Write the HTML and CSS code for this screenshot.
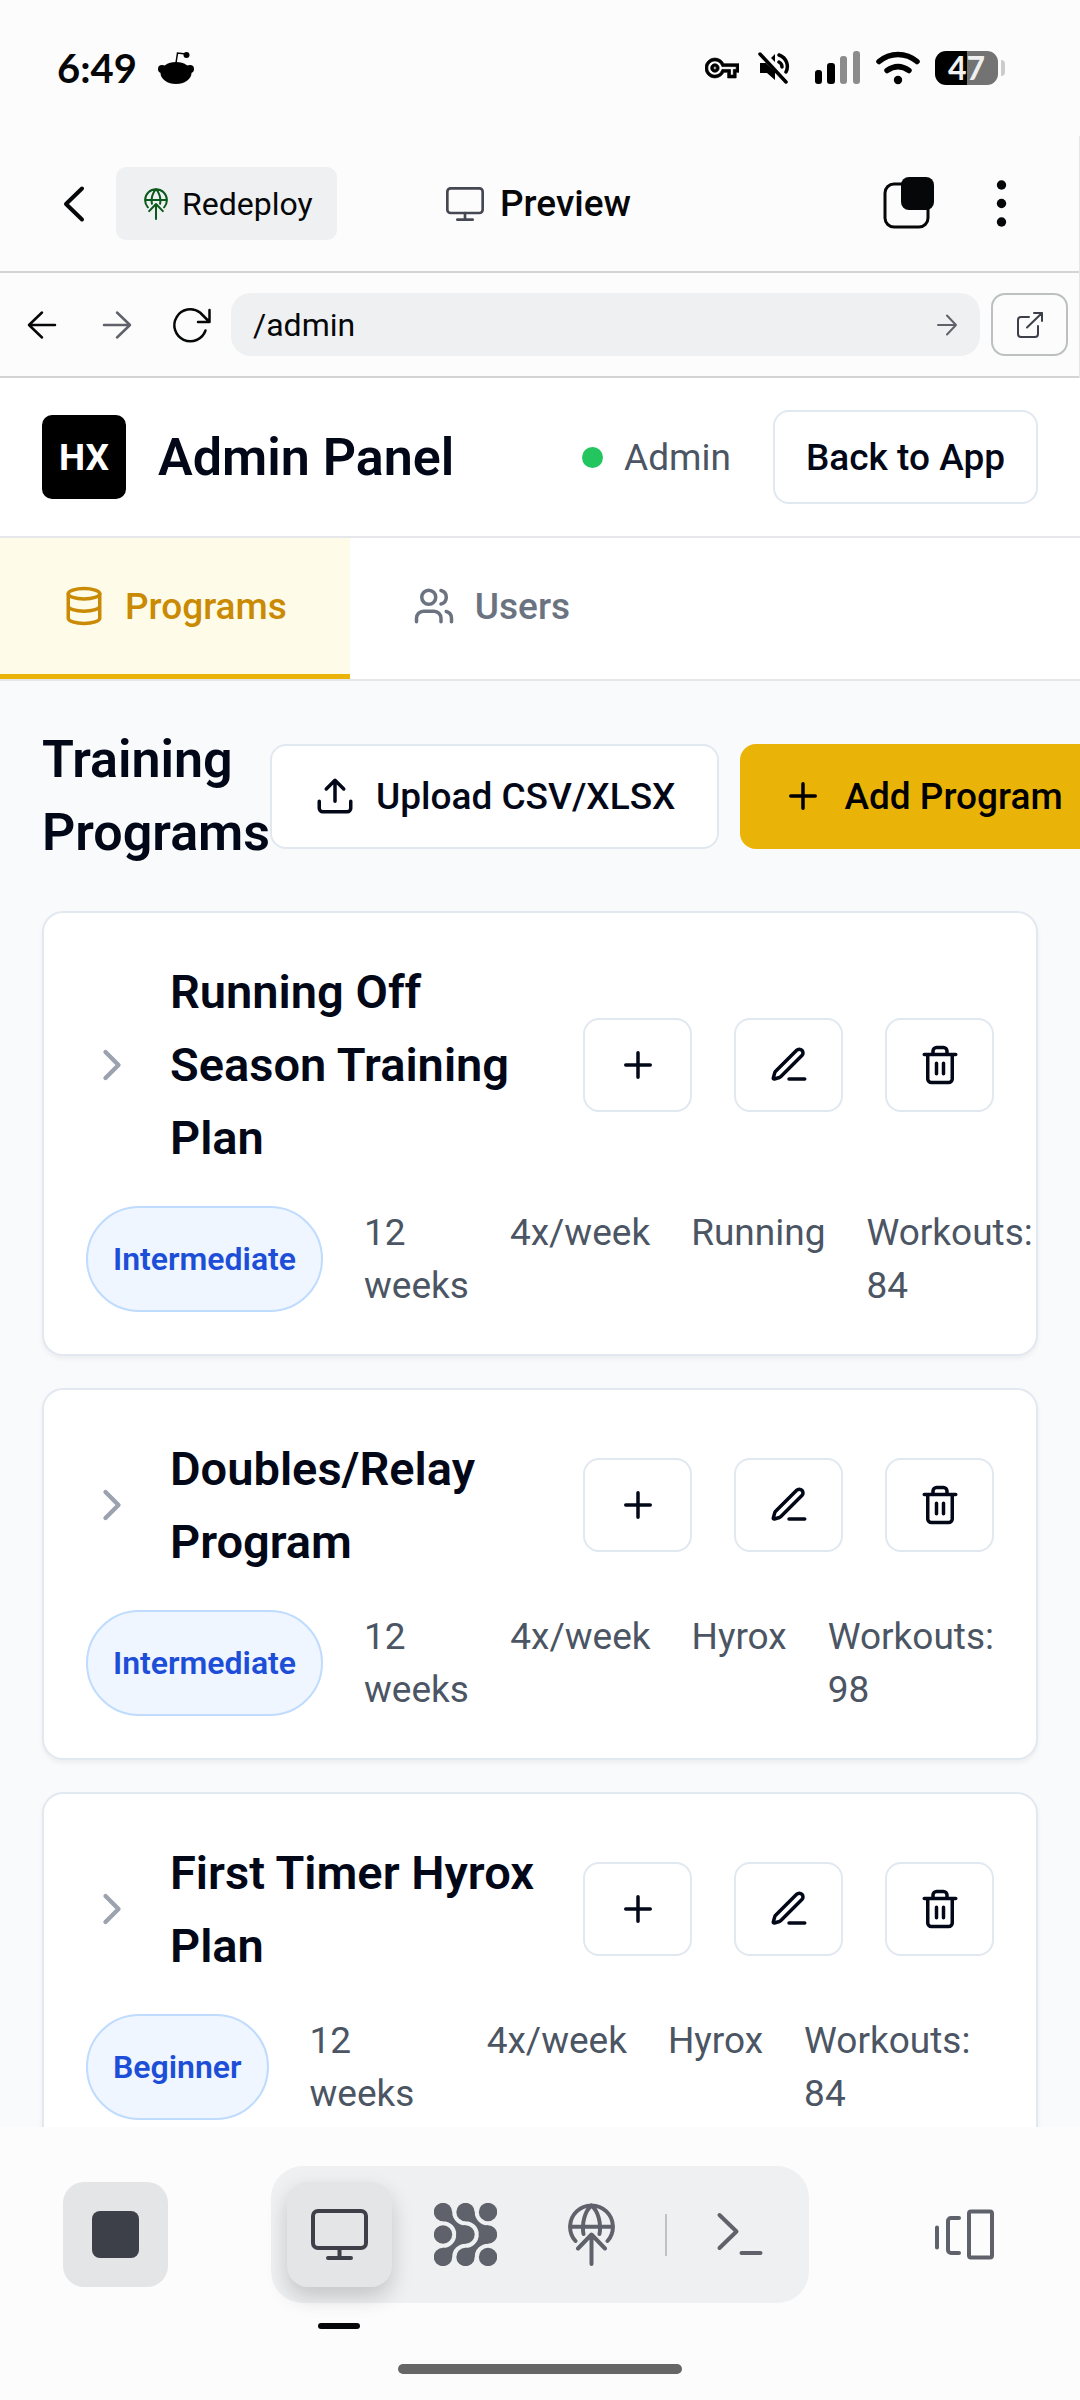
FILE: index.html
```html
<!DOCTYPE html>
<html lang="en">
<head>
<meta charset="utf-8">
<meta name="viewport" content="width=device-width, initial-scale=1">
<title>Admin Panel - Preview</title>
<link rel="stylesheet" href="styles.css">
</head>
<body>
<svg class="sprite" aria-hidden="true">
  <symbol id="i-monitor" viewBox="0 0 63 63"><rect x="5" y="8" width="53" height="37" rx="5"/><path d="M31.500 45v10M20 55h23"/></symbol>
  <symbol id="i-deploy" viewBox="0 0 63 63"><path d="M15.500 38A21.400 21.400 0 1 1 47.500 38M10 23.700h43M31.500 2.500C25 8 21.500 20 23.500 31M31.500 2.500C38 8 41.500 20 39.500 31M31.500 32v29M18 45.500l13.500-14L45 45.500"/></symbol>
  <symbol id="i-plus" viewBox="0 0 24 24"><path d="M5 12h14M12 5v14"/></symbol>
  <symbol id="i-edit" viewBox="0 0 24 24"><path d="M12 20h9M16.376 3.622a1 1 0 0 1 3.002 3.002L7.368 18.635a2 2 0 0 1-.855.506l-2.872.838a.5.5 0 0 1-.62-.62l.838-2.872a2 2 0 0 1 .506-.854z"/></symbol>
  <symbol id="i-trash" viewBox="0 0 24 24"><path d="M3 6h18M19 6v14c0 1-1 2-2 2H7c-1 0-2-1-2-2V6M8 6V4c0-1 1-2 2-2h4c1 0 2 1 2 2v2M10 11v6M14 11v6"/></symbol>
  <symbol id="i-chevron" viewBox="0 0 24 24"><path d="m9 18 6-6-6-6"/></symbol>
</svg>

<header class="status">
  <div class="status-left">
    <span class="clock">6:49</span>
    <svg width="36" height="32" viewBox="0 0 36 32" aria-hidden="true"><path d="M18 11 19.500 1 28 2" fill="none" stroke="#000" stroke-width="1.500"/><circle cx="28.500" cy="3" r="3"/><circle cx="4" cy="17" r="4"/><circle cx="32" cy="17" r="4"/><ellipse cx="18" cy="21" rx="15.500" ry="11"/></svg>
  </div>
  <div class="status-right">
    <svg class="key" width="34" height="34" viewBox="0 0 24 24" aria-hidden="true"><path stroke="#000" stroke-width=".5" d="M22 19h-6v-4h-2.680c-1.140 2.420-3.600 4-6.320 4-3.860 0-7-3.140-7-7s3.140-7 7-7c2.720 0 5.170 1.580 6.320 4H24v6h-2v4zm-4-2h2v-4h2v-2H11.940l-.23-.67C11.010 8.340 9.110 7 7 7c-2.760 0-5 2.240-5 5s2.240 5 5 5c2.110 0 4.010-1.340 4.710-3.330l.23-.67H18v4zM7 15c-1.650 0-3-1.350-3-3s1.350-3 3-3 3 1.350 3 3-1.350 3-3 3zm0-4c-.55 0-1 .45-1 1s.45 1 1 1 1-.45 1-1-.45-1-1-1z"/></svg>
    <svg class="mute" width="32" height="32" viewBox="0 0 32 32" aria-hidden="true"><path d="M2 11h6L17 20v8l-8-7H2zM13 6l4-4v8z"/><path d="M2 2 28 30M21 3c8 3 10 11 7 17M21 10c2 1 3 3 3 5" fill="none" stroke="#000" stroke-width="3.500" stroke-linecap="round"/></svg>
    <svg class="signal" width="46" height="34" viewBox="0 0 46 34" aria-hidden="true"><rect x="0" y="19" width="7" height="14" rx="3"/><rect x="12" y="12" width="8" height="21" rx="3"/><rect x="25" y="5" width="7" height="28" rx="3" fill="#8c8c8c"/><rect x="38" y="0" width="7" height="33" rx="3" fill="#8c8c8c"/></svg>
    <svg class="wifi" width="44" height="34" viewBox="0 0 44 34" aria-hidden="true"><path d="M3 10.500C14 1 30 1 41 10.500M11 19.500c7-5 15-5 22 0" fill="none" stroke="#000" stroke-width="5.500" stroke-linecap="round"/><circle cx="22" cy="29" r="4.200"/></svg>
    <span class="battery">47</span>
    <span class="battery-tip"></span>
  </div>
</header>

<div class="browser">
<div class="toolbar">
  <div class="toolbar-left">
    <button class="tool back" aria-label="Back"><svg width="64" height="64" viewBox="0 0 64 64"><path d="M40 16.500 24 32l16 15.500" stroke-width="4"/></svg></button>
    <button class="redeploy"><svg class="deploy-small" width="32" height="32"><use href="#i-deploy"/></svg>Redeploy</button>
  </div>
  <div class="toolbar-title"><svg width="42" height="42"><use href="#i-monitor"/></svg><span>Preview</span></div>
  <div class="toolbar-right">
    <button class="tool" aria-label="Tabs"><svg width="63" height="63" viewBox="0 0 63 63"><rect x="8" y="12" width="43" height="43" rx="9" stroke-width="3"/><rect x="24" y="5" width="33" height="33" rx="8" fill="#060709" stroke="none"/></svg></button>
    <button class="tool" aria-label="More"><svg width="63" height="63" viewBox="0 0 63 63"><g fill="#060709" stroke="none"><circle cx="31.500" cy="13" r="4.700"/><circle cx="31.500" cy="31.500" r="4.700"/><circle cx="31.500" cy="50" r="4.700"/></g></svg></button>
  </div>
</div>

<div class="urlbar">
  <div class="nav">
    <button class="tool" aria-label="Go back"><svg width="42" height="42" viewBox="0 0 42 42" stroke-width="2.500"><path d="M34 21H8M21 8.500 8 21l13 12.500"/></svg></button>
    <button class="tool dim" aria-label="Go forward"><svg width="42" height="42" viewBox="0 0 42 42" stroke-width="2.500"><path d="M8 21h26M21 8.500 34 21 21 33.500"/></svg></button>
    <button class="tool" aria-label="Reload"><svg width="42" height="42" viewBox="0 0 42 42" stroke-width="2.500"><path d="M34.500 26.500A16 16 0 1 1 29 8.500L38.500 18M38.500 6v12H27"/></svg></button>
  </div>
  <form class="address">
    <input type="text" aria-label="Address" value="/admin">
    <button type="button" class="go" aria-label="Go"><svg width="22" height="22" viewBox="0 0 22 22"><path d="M2 11h18M11 1.500 20 11l-9 9.500"/></svg></button>
  </form>
  <button class="open" aria-label="Open in new tab"><svg width="28" height="28" viewBox="0 0 28 28"><path d="M13 6H5a3 3 0 0 0-3 3v14a3 3 0 0 0 3 3h14a3 3 0 0 0 3-3v-8M11 16.500 26 2M18 2h8v8"/></svg></button>
</div>
</div>

<div class="app">
  <header class="app-header">
    <div class="brand"><span class="logo">HX</span><h1>Admin Panel</h1></div>
    <div class="account">
      <span class="role"><i class="dot"></i>Admin</span>
      <button class="btn btn-back">Back to App</button>
    </div>
  </header>
  <nav class="tabs">
    <button class="tab active"><svg class="icon" viewBox="0 0 24 24"><ellipse cx="12" cy="5" rx="9" ry="3"/><path d="M3 5v14a9 3 0 0 0 18 0V5M3 12a9 3 0 0 0 18 0"/></svg>Programs</button>
    <button class="tab"><svg class="icon" viewBox="0 0 24 24"><path d="M16 21v-2a4 4 0 0 0-4-4H6a4 4 0 0 0-4 4v2M22 21v-2a4 4 0 0 0-3-3.870M16 3.130a4 4 0 0 1 0 7.750"/><circle cx="9" cy="7" r="4"/></svg>Users</button>
  </nav>
  <main class="content">
    <div class="section-head">
      <h2>Training Programs</h2>
      <div class="section-actions">
        <button class="btn btn-large"><svg class="icon" viewBox="0 0 24 24"><path d="M21 15v4a2 2 0 0 1-2 2H5a2 2 0 0 1-2-2v-4M17 8l-5-5-5 5M12 3v12"/></svg>Upload CSV/XLSX</button>
        <button class="btn btn-large btn-primary"><svg class="icon"><use href="#i-plus"/></svg>Add Program</button>
      </div>
    </div>

    <article class="card">
      <div class="card-head">
        <button class="expand" aria-label="Expand"><svg class="chevron"><use href="#i-chevron"/></svg></button>
        <h3>Running Off Season Training Plan</h3>
        <div class="card-actions">
          <button class="btn btn-icon" aria-label="Add workout"><svg class="icon"><use href="#i-plus"/></svg></button>
          <button class="btn btn-icon" aria-label="Edit"><svg class="icon"><use href="#i-edit"/></svg></button>
          <button class="btn btn-icon" aria-label="Delete"><svg class="icon"><use href="#i-trash"/></svg></button>
        </div>
      </div>
      <div class="meta"><span class="badge">Intermediate</span><span>12 weeks</span><span>4x/week</span><span>Running</span><span>Workouts: 84</span></div>
    </article>

    <article class="card">
      <div class="card-head">
        <button class="expand" aria-label="Expand"><svg class="chevron"><use href="#i-chevron"/></svg></button>
        <h3>Doubles/Relay Program</h3>
        <div class="card-actions">
          <button class="btn btn-icon" aria-label="Add workout"><svg class="icon"><use href="#i-plus"/></svg></button>
          <button class="btn btn-icon" aria-label="Edit"><svg class="icon"><use href="#i-edit"/></svg></button>
          <button class="btn btn-icon" aria-label="Delete"><svg class="icon"><use href="#i-trash"/></svg></button>
        </div>
      </div>
      <div class="meta"><span class="badge">Intermediate</span><span>12 weeks</span><span>4x/week</span><span>Hyrox</span><span>Workouts: 98</span></div>
    </article>

    <article class="card">
      <div class="card-head">
        <button class="expand" aria-label="Expand"><svg class="chevron"><use href="#i-chevron"/></svg></button>
        <h3>First Timer Hyrox Plan</h3>
        <div class="card-actions">
          <button class="btn btn-icon" aria-label="Add workout"><svg class="icon"><use href="#i-plus"/></svg></button>
          <button class="btn btn-icon" aria-label="Edit"><svg class="icon"><use href="#i-edit"/></svg></button>
          <button class="btn btn-icon" aria-label="Delete"><svg class="icon"><use href="#i-trash"/></svg></button>
        </div>
      </div>
      <div class="meta"><span class="badge">Beginner</span><span>12 weeks</span><span>4x/week</span><span>Hyrox</span><span>Workouts: 84</span></div>
    </article>
  </main>
</div>

<footer class="dock">
  <div class="dock-row">
    <button class="dock-btn filled" aria-label="Stop"><span class="stop"></span></button>
    <div class="dock-group">
      <button class="dock-btn current" aria-label="Preview"><svg width="63" height="63"><use href="#i-monitor"/></svg></button>
      <button class="dock-btn" aria-label="Agent"><svg width="63" height="63" viewBox="0 0 63 63"><g fill="#5f626a" stroke="none"><circle cx="9" cy="9" r="9.200"/><circle cx="31.500" cy="9" r="9.200"/><circle cx="54" cy="9" r="9.200"/><circle cx="9" cy="31.500" r="9.200"/><circle cx="31.500" cy="31.500" r="9.200"/><circle cx="54" cy="31.500" r="9.200"/><circle cx="9" cy="54" r="9.200"/><circle cx="31.500" cy="54" r="9.200"/><circle cx="54" cy="54" r="9.200"/><path id="links" d="M9 9v9.200A13.300 13.300 0 0 1 22.300 31.500H31.500V22.300A13.300 13.300 0 0 1 18.200 9ZM9 54v-9.200A13.300 13.300 0 0 0 22.300 31.500H31.500V40.700A13.300 13.300 0 0 0 18.200 54Z"/><use href="#links" x="22.500"/></g></svg></button>
      <button class="dock-btn" aria-label="Deploy"><svg width="63" height="63"><use href="#i-deploy"/></svg></button>
      <span class="divider"></span>
      <button class="dock-btn" aria-label="Shell"><svg width="63" height="63" viewBox="0 0 63 63"><path d="M10.500 12 27.500 28.500 10.500 45M32.500 50h19"/></svg></button>
    </div>
    <button class="dock-btn" aria-label="All tabs"><svg width="63" height="63" viewBox="0 0 63 63"><path d="M4 24.500v20M26 15H18a3 3 0 0 0-3 3v29a3 3 0 0 0 3 3h8"/><rect x="36" y="8.500" width="23" height="46" rx="2"/></svg></button>
  </div>
  <div class="home-bar"></div>
</footer>
</body>
</html>
```

FILE: styles.css
```css
* { box-sizing: border-box; }

body {
  margin: 0;
  height: 100vh;
  display: flex;
  flex-direction: column;
  overflow: hidden;
  background: #fcfcfc;
  color: #060709;
  font-family: Roboto, "Liberation Sans", sans-serif;
}

h1, h2, h3 { margin: 0; font-weight: 600; }

button {
  margin: 0;
  padding: 0;
  border: 0;
  background: none;
  color: inherit;
  font: inherit;
  display: flex;
  align-items: center;
  justify-content: center;
  flex-shrink: 0;
}

svg { display: block; flex-shrink: 0; }
.sprite { position: absolute; width: 0; height: 0; }

/* Device status bar */
.status {
  flex: none;
  height: 136px;
  padding: 0 75px 0 57px;
  display: flex;
  align-items: center;
  justify-content: space-between;
}
.status-left, .status-right { display: flex; align-items: center; }
.status-left { gap: 21px; }
.clock { font: 700 40px/44px Lato, sans-serif; }
.key { margin-right: 19px; }
.mute { margin-right: 25px; }
.signal { margin-right: 15px; }
.wifi { margin-right: 15px; }
.battery {
  width: 63px;
  height: 34px;
  border-radius: 11px;
  background: linear-gradient(90deg, #000 50%, #737373 50%);
  color: #f0f0f0;
  font: 700 32px/34px Lato, sans-serif;
  text-align: center;
}
.battery-tip {
  width: 4px;
  height: 16px;
  margin-left: 3px;
  border-radius: 0 4px 4px 0;
  background: #ccc;
}

/* Workspace browser chrome */
.browser {
  flex: none;
  border-right: 1px solid #e6e6e6;
}
.browser svg, .dock svg {
  fill: none;
  stroke: currentColor;
  stroke-linecap: round;
  stroke-linejoin: round;
}
.toolbar {
  height: 137px;
  padding: 0 46px 0 42px;
  display: grid;
  grid-template-columns: 1fr auto 1fr;
  align-items: center;
  border-bottom: 2px solid #d3d4d5;
}
.toolbar-left { display: flex; align-items: center; gap: 11px; }
.toolbar-right { display: flex; justify-content: flex-end; gap: 30px; }
.toolbar-title {
  display: flex;
  align-items: center;
  gap: 14px;
  font-size: 37px;
  font-weight: 500;
}
.toolbar-title svg { stroke-width: 4; color: #454852; }
.tool { width: 63px; height: 63px; }
.tool.dim { color: #5f626a; }
.redeploy {
  height: 73px;
  padding: 0 24px;
  gap: 10px;
  border-radius: 10px;
  background: #eff0f2;
  font-size: 32px;
}
.deploy-small { stroke-width: 4; color: #0b5a1b; }

.urlbar {
  padding: 20px 11px 20px 10px;
  display: flex;
  align-items: center;
  border-bottom: 2px solid #d3d4d5;
}
.nav { display: flex; gap: 12px; margin-right: 8px; }
.address {
  flex: 1;
  min-width: 0;
  height: 63px;
  margin-right: 11px;
  padding: 0 22px;
  display: flex;
  align-items: center;
  border-radius: 20px;
  background: #eff0f2;
}
.address input {
  flex: 1;
  min-width: 0;
  padding: 0;
  border: 0;
  background: none;
  color: #060709;
  font: 400 32px/40px Roboto, sans-serif;
}
.go { color: #5f626a; }
.go svg, .open svg { stroke-width: 2; }
.open {
  width: 77px;
  height: 63px;
  border: 2px solid #bcc0c1;
  border-radius: 14px;
  color: #3d4048;
}

/* Previewed application */
.app {
  flex: 1;
  min-height: 0;
  overflow: hidden;
  background: #f8fafc;
  color: #020817;
  font-size: 37px;
}
.icon {
  width: 42px;
  height: 42px;
}
.icon, .chevron {
  fill: none;
  stroke: currentColor;
  stroke-width: 2;
  stroke-linecap: round;
  stroke-linejoin: round;
}
.btn {
  border: 2px solid #e2e8f0;
  border-radius: 16px;
  background: #fff;
  font-weight: 500;
  white-space: nowrap;
}

.app-header {
  padding: 32px 42px;
  display: flex;
  align-items: center;
  justify-content: space-between;
  background: #fff;
  border-bottom: 2px solid #e5e7eb;
}
.brand { display: flex; align-items: center; gap: 32px; }
.logo {
  width: 84px;
  height: 84px;
  display: grid;
  place-items: center;
  border-radius: 10px;
  background: #000;
  color: #fff;
  font-weight: 700;
}
h1 { font-size: 52px; line-height: 73px; }
.account { display: flex; align-items: center; gap: 42px; }
.role {
  display: flex;
  align-items: center;
  gap: 21px;
  color: #4b5563;
}
.dot { width: 21px; height: 21px; border-radius: 50%; background: #22c55e; }
.btn-back { height: 94px; padding: 0 31px; }

.tabs {
  display: flex;
  background: #fff;
  border-bottom: 2px solid #e5e7eb;
}
.tab {
  height: 141px;
  padding: 0 63px;
  gap: 20px;
  border-bottom: 5px solid transparent;
  color: #6b7280;
  font-weight: 500;
}
.tab.active {
  background: #fefce8;
  border-bottom-color: #eab308;
  color: #ca8a04;
}

.content { padding: 42px; }
.section-head {
  display: flex;
  align-items: center;
  justify-content: space-between;
  margin-bottom: 42px;
}
h2 { font-size: 52px; line-height: 73px; }
.section-actions { display: flex; gap: 21px; }
.btn-large { height: 105px; padding: 0 42px; gap: 20px; }
.btn-primary {
  border: 0;
  background: #eab308;
  color: #000;
}

.card {
  margin-bottom: 32px;
  padding: 42px;
  background: #fff;
  border: 2px solid #e2e8f0;
  border-radius: 21px;
  box-shadow: 0 3px 5px rgba(0, 0, 0, 0.05);
}
.card-head {
  display: flex;
  align-items: center;
  margin-bottom: 32px;
}
.expand { margin-right: 32px; color: #9ca3af; }
.chevron { width: 52px; height: 52px; }
h3 {
  flex: 1;
  min-width: 0;
  font-size: 47px;
  line-height: 73px;
}
.card-actions { display: flex; gap: 42px; margin-left: 42px; }
.btn-icon { width: 109px; height: 94px; }

.meta {
  display: flex;
  gap: 41px;
  color: #4b5563;
  line-height: 53px;
}
.badge {
  display: flex;
  align-items: center;
  padding: 0 25px;
  border: 2px solid #bfdbfe;
  border-radius: 53px;
  background: #eff6ff;
  color: #1d4ed8;
  font-size: 32px;
  font-weight: 600;
}

/* Bottom dock */
.dock {
  flex: none;
  padding: 39px 63px 26px;
  background: #fcfcfc;
}
.dock-row {
  display: flex;
  align-items: center;
  justify-content: space-between;
}
.dock-btn {
  position: relative;
  width: 105px;
  height: 105px;
  border-radius: 21px;
  color: #5f626a;
}
.dock-btn svg { stroke-width: 4; }
.dock-btn.filled { background: #e4e5e6; }
.stop { width: 47px; height: 47px; border-radius: 8px; background: #3d4048; }
.dock-group {
  padding: 16px;
  display: flex;
  align-items: center;
  gap: 21px;
  border-radius: 32px;
  background: #eff0f2;
}
.dock-btn.current {
  background: #e4e5e6;
  color: #3d4048;
  box-shadow: 0 10px 21px rgba(0, 0, 0, 0.18);
}
.dock-btn.current::after {
  content: "";
  position: absolute;
  left: 31px;
  bottom: -42px;
  width: 42px;
  height: 6px;
  border-radius: 3px;
  background: #060709;
}
.divider { width: 2px; height: 42px; background: #c0c2c4; }
.home-bar {
  width: 284px;
  height: 10px;
  margin: 61px auto 0;
  border-radius: 5px;
  background: #666;
}
```
